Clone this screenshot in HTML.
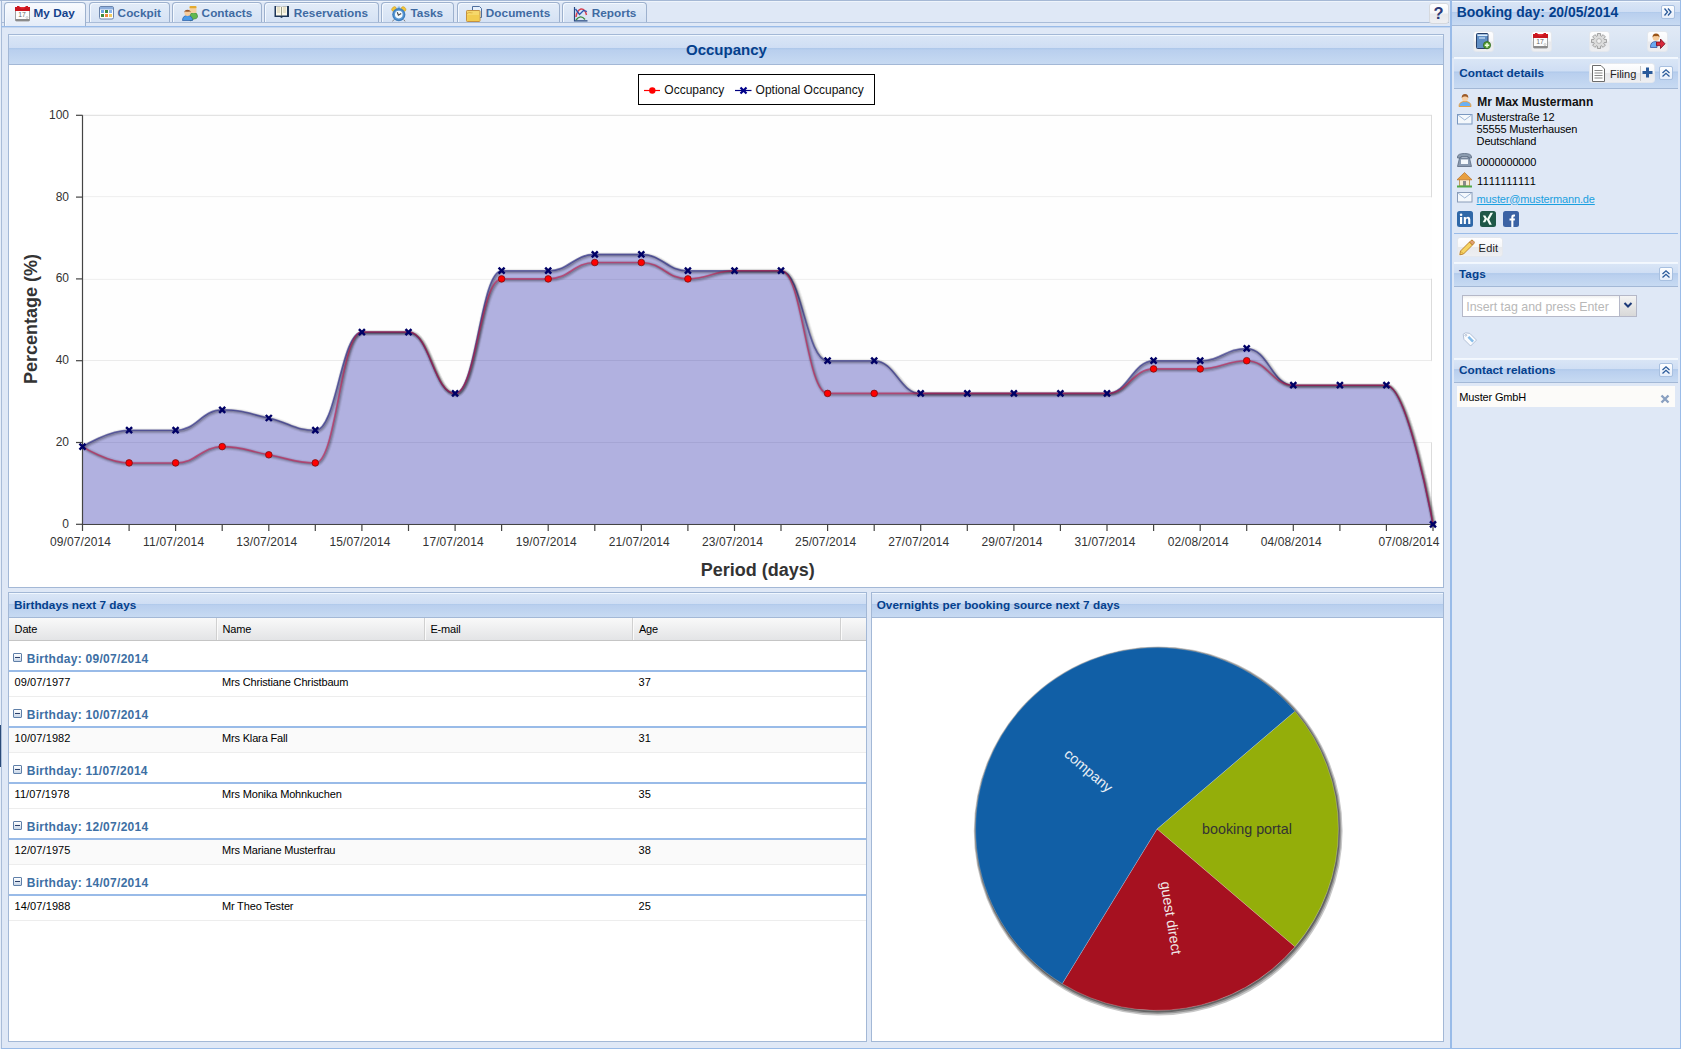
<!DOCTYPE html>
<html><head><meta charset="utf-8"><style>
*{box-sizing:border-box;margin:0;padding:0}
html,body{width:1681px;height:1049px;overflow:hidden;background:#dfe8f6;font-family:"Liberation Sans",sans-serif;position:relative}
.a{position:absolute}
.ic{position:absolute;overflow:visible}
.t{position:absolute;white-space:nowrap;line-height:1}
.hdr{position:absolute;background:linear-gradient(#dae6f6 0%,#cfdef4 44%,#aec8ea 46%,#b9cfee 52%,#c7daf2 100%);border-bottom:1px solid #a3b8d6;box-shadow:inset 0 1px 0 #f0f7ff}
.ttl{position:absolute;white-space:nowrap;font-weight:bold;font-size:11.75px;color:#04408c;letter-spacing:0.04px;line-height:1;margin-top:-0.65px}
.tab{position:absolute;top:2px;height:20px;border:1px solid #9db1ce;border-bottom:none;border-radius:4px 4px 0 0;background:linear-gradient(#e3ecf8,#d5e2f4);box-shadow:inset 1px 1px 0 #f4f9ff}
.tab.act{height:24px;background:linear-gradient(#f9fbfe,#e4ecf8)}
.tabt{position:absolute;top:7.35px;font-weight:bold;font-size:11.75px;color:#416da3;letter-spacing:0.05px;white-space:nowrap;line-height:1}
.ax{font:12px "Liberation Sans",sans-serif;fill:#333}
.at{font:bold 18px "Liberation Sans",sans-serif;fill:#333}
.lg{font:12px "Liberation Sans",sans-serif;fill:#111}
.pl{font:14.3px "Liberation Sans",sans-serif}
.g11{font-size:11px;color:#000;letter-spacing:-0.15px}
.grp{font-weight:bold;font-size:12px;color:#3d6fa4;letter-spacing:0.28px;margin-top:-0.2px}
.btn{position:absolute;border:1px solid #e4e8ee;border-radius:3px;background:linear-gradient(#fefeff 0%,#f6f7f9 48%,#e8e9ec 52%,#eeeff2 100%)}
.tool{position:absolute;width:14px;height:14px;border:1px solid #a8c0e0;border-radius:2px;background:linear-gradient(#fdfeff,#e6eefa)}
</style></head>
<body>
<div class="a" style="left:0;top:0;width:1450px;height:1px;background:#a5b8d5"></div><div class="a" style="left:2px;top:1px;width:1447px;height:1px;background:#eef4fb"></div>
<div class="a" style="left:1px;top:1px;width:1px;height:25px;background:#a9bcd8"></div>
<div class="a" style="left:2px;top:22px;width:1447px;height:1px;background:#a9bcd8"></div>
<div class="tab act" style="left:4px;width:82px"></div><svg class="ic" style="left:15px;top:6px" width="16" height="16" viewBox="0 0 16 16"><rect x="0.5" y="1.5" width="14" height="13.5" rx="0.8" fill="#fdfdfd" stroke="#a0a0a0"/><rect x="0" y="1" width="15" height="4" fill="#c8161e"/><rect x="2" y="0" width="2.5" height="2" fill="#d01820"/><rect x="10.5" y="0" width="2.5" height="2" fill="#d01820"/><rect x="5.5" y="1" width="4" height="1.5" fill="#e83038"/><rect x="0.5" y="13" width="14" height="2" fill="#8a8a8a"/><text x="7" y="11.3" font-size="6.8" font-family="Liberation Sans" text-anchor="middle" fill="#6a6a6a">17</text><circle cx="12" cy="11.5" r="1" fill="none" stroke="#b0b0b0" stroke-width="0.6"/></svg><div class="tabt" style="left:33.5px;color:#15428b">My Day</div>
<div class="tab" style="left:89px;width:81px"></div><svg class="ic" style="left:98px;top:6px" width="16" height="16" viewBox="0 0 16 16"><rect x="1.5" y="0.5" width="14" height="12.5" rx="1.5" fill="#fff" stroke="#6a84ac"/><rect x="2" y="1" width="13" height="2.5" fill="#8fb0de"/><rect x="3" y="4" width="3" height="3" fill="#72a8e4"/><rect x="7" y="4" width="3" height="3" fill="#3c8a40"/><rect x="11" y="4" width="3" height="3" fill="#88b4ec"/><rect x="3" y="8" width="3" height="3" fill="#3c8a40"/><rect x="7" y="8" width="3" height="3" fill="#ee8840"/><rect x="11" y="8" width="3" height="3" fill="#f0cc60"/></svg><div class="tabt" style="left:117.60000000000001px;color:#3f6aa2">Cockpit</div>
<div class="tab" style="left:172px;width:90px"></div><svg class="ic" style="left:182px;top:6px" width="16" height="16" viewBox="0 0 16 16"><path d="M8,15 V10 Q8,6.5 11.5,6.5 Q15.5,6.5 15.5,10 V11 Q15,13 12,13 Z" fill="#62b850" stroke="#3a7a30" stroke-width="0.6"/><rect x="7.5" y="0" width="7" height="7" rx="1.5" fill="#f4d0a0"/><rect x="7.5" y="0" width="7" height="2.3" rx="1" fill="#e2aa30"/><path d="M0.5,14.5 Q0.5,9.5 5.5,9.5 Q10.5,9.5 10.5,14.5 Z" fill="#4a9ae8" stroke="#2a5aa0" stroke-width="0.7"/><circle cx="5.5" cy="7" r="3" fill="#f6cc9c"/><path d="M2.3,6.5 Q2.5,3.8 5.5,3.8 Q8.5,3.8 8.7,6.5 L7.5,5.5 Q5.5,6.2 3.5,5.5 Z" fill="#9a5a2e"/></svg><div class="tabt" style="left:201.6px;color:#3f6aa2">Contacts</div>
<div class="tab" style="left:264px;width:115px"></div><svg class="ic" style="left:274px;top:5px" width="16" height="16" viewBox="0 0 16 16"><path d="M0.5,1 H6 L7.5,2 L9,1 H15 V12 H9 L7.5,13 L6,12 H0.5 Z" fill="#1e3658"/><rect x="2" y="1.3" width="5.2" height="9.2" fill="#fbf8ea"/><rect x="7.8" y="1.3" width="5.2" height="9.2" fill="#fbf8ea"/><path d="M3,3 H6 M3,5 H6 M3,7 H6 M9,3 H12 M9,5 H12 M9,7 H12" stroke="#d4ccaa" stroke-width="1"/><path d="M7.5,2 V10.5" stroke="#a8a888" stroke-width="0.8"/></svg><div class="tabt" style="left:293.7px;color:#3f6aa2">Reservations</div>
<div class="tab" style="left:381px;width:73px"></div><svg class="ic" style="left:391px;top:6px" width="16" height="16" viewBox="0 0 16 16"><ellipse cx="3" cy="3" rx="2.6" ry="2" transform="rotate(-40 3 3)" fill="#f0c438" stroke="#c89820" stroke-width="0.5"/><ellipse cx="12.6" cy="3" rx="2.6" ry="2" transform="rotate(40 12.6 3)" fill="#f0c438" stroke="#c89820" stroke-width="0.5"/><rect x="6.6" y="0.6" width="2.6" height="1.8" rx="0.6" fill="#8abce0"/><circle cx="7.8" cy="8.6" r="6.6" fill="#3f7fbe"/><circle cx="7.8" cy="8.6" r="5.2" fill="#5a9ad6"/><circle cx="7.8" cy="8.6" r="3.8" fill="#f4fbff"/><path d="M6.3,6.2 L7.4,9.2 L10.2,7.6" fill="none" stroke="#4a4a4a" stroke-width="1.2"/><path d="M2.8,13.6 L1.6,15.4 M12.8,13.6 L14,15.4" stroke="#707070" stroke-width="0.9"/></svg><div class="tabt" style="left:410.5px;color:#3f6aa2">Tasks</div>
<div class="tab" style="left:457px;width:103px"></div><svg class="ic" style="left:466px;top:5.5px" width="16" height="16" viewBox="0 0 16 16"><path d="M6.5,0.5 H13.5 L15.5,2.5 V11.5 H6.5 Z" fill="#e6f0fc" stroke="#4f6f9e"/><rect x="0.5" y="4.5" width="13.5" height="11" rx="0.8" fill="#f6d86a" stroke="#c49040"/><path d="M1,7.5 Q2.5,6 5.5,6.8 L6.5,6.8" fill="none" stroke="#d8a840" stroke-width="0.9"/><rect x="1.2" y="9" width="12" height="6" fill="#f2cc50"/></svg><div class="tabt" style="left:485.8px;color:#3f6aa2">Documents</div>
<div class="tab" style="left:562px;width:85px"></div><svg class="ic" style="left:572.5px;top:6px" width="16" height="16" viewBox="0 0 16 16"><path d="M1.5,1 V14.8 H14.5" fill="none" stroke="#274880" stroke-width="1.2"/><path d="M3,11 Q4,4 8,3 Q12,2.5 13.5,9" fill="none" stroke="#d84050" stroke-width="1.5"/><path d="M2.5,3 L6.5,8.5 L10.5,4.5 L14,5.5" fill="none" stroke="#2a54b0" stroke-width="1.3"/><path d="M3,14 Q7.5,8 12,13.5" fill="none" stroke="#3f8a40" stroke-width="1.4"/></svg><div class="tabt" style="left:591.7px;color:#3f6aa2">Reports</div>
<div class="btn" style="left:1428.5px;top:2.5px;width:20.5px;height:21px;border-color:#d6d9de"></div>
<div class="t" style="left:1433.6px;top:5.2px;font-weight:bold;font-size:16.5px;color:#2c3a78">?</div>
<div class="a" style="left:1px;top:26px;width:1449px;height:1px;background:#99bbe8"></div>
<div class="a" style="left:1px;top:27px;width:1449px;height:1px;background:#c5d6ee"></div>
<div class="a" style="left:1px;top:27px;width:1px;height:1022px;background:#a9bcd8"></div>
<div class="a" style="left:1px;top:1048px;width:1449px;height:1px;background:#99bbe8"></div>
<div class="a" style="left:0;top:1px;width:1px;height:1048px;background:#e6eef9"></div>
<div class="a" style="left:0;top:725px;width:1px;height:42px;background:#2a4a78"></div>
<div class="a" style="left:8px;top:34px;width:1436px;height:554px;border:1px solid #a3b8d6;background:#fff"></div>
<div class="hdr" style="left:9px;top:35px;width:1434px;height:30px"></div>
<div class="t" style="left:686px;top:41.5px;font-weight:bold;font-size:15px;color:#04408c">Occupancy</div>
<div class="a" style="left:8px;top:592px;width:859px;height:450px;border:1px solid #a3b8d6;background:#fff"></div>
<div class="hdr" style="left:9px;top:593px;width:857px;height:25px"></div>
<div class="ttl" style="left:14px;top:600px">Birthdays next 7 days</div>
<div class="a" style="left:9px;top:618px;width:857px;height:23px;background:linear-gradient(#f9f9f9,#e3e4e6);border-bottom:1px solid #c5c5c5"></div>
<div class="a" style="left:216px;top:618px;width:1px;height:22px;background:#d0d0d0"></div>
<div class="a" style="left:217px;top:618px;width:1px;height:22px;background:#fbfbfb"></div>
<div class="a" style="left:424px;top:618px;width:1px;height:22px;background:#d0d0d0"></div>
<div class="a" style="left:425px;top:618px;width:1px;height:22px;background:#fbfbfb"></div>
<div class="a" style="left:632px;top:618px;width:1px;height:22px;background:#d0d0d0"></div>
<div class="a" style="left:633px;top:618px;width:1px;height:22px;background:#fbfbfb"></div>
<div class="a" style="left:840px;top:618px;width:1px;height:22px;background:#d0d0d0"></div>
<div class="a" style="left:841px;top:618px;width:1px;height:22px;background:#fbfbfb"></div>
<div class="t g11" style="left:14.6px;top:624px">Date</div>
<div class="t g11" style="left:222.4px;top:624px">Name</div>
<div class="t g11" style="left:430.4px;top:624px">E-mail</div>
<div class="t g11" style="left:638.9px;top:624px">Age</div>
<div class="a" style="left:9px;top:670px;width:857px;height:2px;background:#99bbe8"></div>
<div class="a" style="left:13px;top:653px;width:9px;height:9px;border:1px solid #5f7fa8;border-radius:1px;background:linear-gradient(#fff,#c8d6e8)"></div>
<div class="a" style="left:15px;top:657px;width:5px;height:1px;background:#2a3f6a"></div>
<div class="t grp" style="left:26.8px;top:653.5px">Birthday: 09/07/2014</div>
<div class="a" style="left:9px;top:672px;width:857px;height:25px;background:#fff;border-bottom:1px solid #ededed"></div>
<div class="t g11" style="left:14.5px;top:676.5px;letter-spacing:0.1px">09/07/1977</div>
<div class="t g11" style="left:221.9px;top:676.5px;letter-spacing:-0.15px">Mrs Christiane Christbaum</div>
<div class="t g11" style="left:638.4px;top:676.5px;letter-spacing:0.2px">37</div>
<div class="a" style="left:9px;top:726px;width:857px;height:2px;background:#99bbe8"></div>
<div class="a" style="left:13px;top:709px;width:9px;height:9px;border:1px solid #5f7fa8;border-radius:1px;background:linear-gradient(#fff,#c8d6e8)"></div>
<div class="a" style="left:15px;top:713px;width:5px;height:1px;background:#2a3f6a"></div>
<div class="t grp" style="left:26.8px;top:709.5px">Birthday: 10/07/2014</div>
<div class="a" style="left:9px;top:728px;width:857px;height:25px;background:#fafafa;border-bottom:1px solid #ededed"></div>
<div class="t g11" style="left:14.5px;top:732.5px;letter-spacing:0.1px">10/07/1982</div>
<div class="t g11" style="left:221.9px;top:732.5px;letter-spacing:-0.15px">Mrs Klara Fall</div>
<div class="t g11" style="left:638.4px;top:732.5px;letter-spacing:0.2px">31</div>
<div class="a" style="left:9px;top:782px;width:857px;height:2px;background:#99bbe8"></div>
<div class="a" style="left:13px;top:765px;width:9px;height:9px;border:1px solid #5f7fa8;border-radius:1px;background:linear-gradient(#fff,#c8d6e8)"></div>
<div class="a" style="left:15px;top:769px;width:5px;height:1px;background:#2a3f6a"></div>
<div class="t grp" style="left:26.8px;top:765.5px">Birthday: 11/07/2014</div>
<div class="a" style="left:9px;top:784px;width:857px;height:25px;background:#fff;border-bottom:1px solid #ededed"></div>
<div class="t g11" style="left:14.5px;top:788.5px;letter-spacing:0.1px">11/07/1978</div>
<div class="t g11" style="left:221.9px;top:788.5px;letter-spacing:-0.15px">Mrs Monika Mohnkuchen</div>
<div class="t g11" style="left:638.4px;top:788.5px;letter-spacing:0.2px">35</div>
<div class="a" style="left:9px;top:838px;width:857px;height:2px;background:#99bbe8"></div>
<div class="a" style="left:13px;top:821px;width:9px;height:9px;border:1px solid #5f7fa8;border-radius:1px;background:linear-gradient(#fff,#c8d6e8)"></div>
<div class="a" style="left:15px;top:825px;width:5px;height:1px;background:#2a3f6a"></div>
<div class="t grp" style="left:26.8px;top:821.5px">Birthday: 12/07/2014</div>
<div class="a" style="left:9px;top:840px;width:857px;height:25px;background:#fafafa;border-bottom:1px solid #ededed"></div>
<div class="t g11" style="left:14.5px;top:844.5px;letter-spacing:0.1px">12/07/1975</div>
<div class="t g11" style="left:221.9px;top:844.5px;letter-spacing:-0.15px">Mrs Mariane Musterfrau</div>
<div class="t g11" style="left:638.4px;top:844.5px;letter-spacing:0.2px">38</div>
<div class="a" style="left:9px;top:894px;width:857px;height:2px;background:#99bbe8"></div>
<div class="a" style="left:13px;top:877px;width:9px;height:9px;border:1px solid #5f7fa8;border-radius:1px;background:linear-gradient(#fff,#c8d6e8)"></div>
<div class="a" style="left:15px;top:881px;width:5px;height:1px;background:#2a3f6a"></div>
<div class="t grp" style="left:26.8px;top:877.5px">Birthday: 14/07/2014</div>
<div class="a" style="left:9px;top:896px;width:857px;height:25px;background:#fff;border-bottom:1px solid #ededed"></div>
<div class="t g11" style="left:14.5px;top:900.5px;letter-spacing:0.1px">14/07/1988</div>
<div class="t g11" style="left:221.9px;top:900.5px;letter-spacing:-0.15px">Mr Theo Tester</div>
<div class="t g11" style="left:638.4px;top:900.5px;letter-spacing:0.2px">25</div>
<div class="a" style="left:871px;top:592px;width:573px;height:450px;border:1px solid #a3b8d6;background:#fff"></div>
<div class="hdr" style="left:872px;top:593px;width:571px;height:25px"></div>
<div class="ttl" style="left:876.7px;top:600px">Overnights per booking source next 7 days</div>
<svg class="a" style="left:0;top:0" width="1681" height="1049"><rect x="82.5" y="115.3" width="1349.0" height="81.8" fill="#fefefe" stroke="#dcdcdc" stroke-width="1"/>
<rect x="82.5" y="278.9" width="1349.0" height="81.8" fill="#fefefe" stroke="#dcdcdc" stroke-width="1"/>
<rect x="82.5" y="442.5" width="1349.0" height="81.8" fill="#fefefe" stroke="#dcdcdc" stroke-width="1"/>
<rect x="82.5" y="197.1" width="1349.0" height="81.8" fill="#fefefe"/>
<rect x="82.5" y="360.7" width="1349.0" height="81.8" fill="#fefefe"/>
<path d="M82.50,446.59 C82.50,446.59 107.90,430.23 129.07,430.23 C150.24,430.23 154.47,430.23 175.64,430.23 C196.81,430.23 201.04,409.78 222.21,409.78 C243.37,409.78 248.10,413.43 268.78,417.96 C289.45,422.49 294.18,430.23 315.34,430.23 C336.51,430.23 340.75,332.07 361.91,332.07 C383.08,332.07 387.32,332.07 408.48,332.07 C429.65,332.07 433.88,393.42 455.05,393.42 C476.22,393.42 480.45,270.72 501.62,270.72 C522.79,270.72 527.02,270.72 548.19,270.72 C569.36,270.72 573.59,254.36 594.76,254.36 C615.93,254.36 620.16,254.36 641.33,254.36 C662.50,254.36 666.73,270.72 687.90,270.72 C709.06,270.72 713.30,270.72 734.47,270.72 C755.63,270.72 759.87,270.72 781.03,270.72 C802.20,270.72 806.44,360.70 827.60,360.70 C848.77,360.70 853.00,360.70 874.17,360.70 C895.34,360.70 899.57,393.42 920.74,393.42 C941.91,393.42 946.14,393.42 967.31,393.42 C988.48,393.42 992.71,393.42 1013.88,393.42 C1035.05,393.42 1039.28,393.42 1060.45,393.42 C1081.62,393.42 1085.85,393.42 1107.02,393.42 C1128.18,393.42 1132.42,360.70 1153.59,360.70 C1174.75,360.70 1178.99,360.70 1200.16,360.70 C1221.32,360.70 1225.56,348.43 1246.72,348.43 C1267.89,348.43 1272.13,385.24 1293.29,385.24 C1314.46,385.24 1318.69,385.24 1339.86,385.24 C1361.03,385.24 1365.26,385.24 1386.43,385.24 C1407.60,385.24 1433.00,524.30 1433.00,524.30 L1433.00,524.30 L82.50,524.30 Z" fill="#00009a" fill-opacity="0.3" stroke="none"/>
<path d="M82.50,446.59 C82.50,446.59 107.90,430.23 129.07,430.23 C150.24,430.23 154.47,430.23 175.64,430.23 C196.81,430.23 201.04,409.78 222.21,409.78 C243.37,409.78 248.10,413.43 268.78,417.96 C289.45,422.49 294.18,430.23 315.34,430.23 C336.51,430.23 340.75,332.07 361.91,332.07 C383.08,332.07 387.32,332.07 408.48,332.07 C429.65,332.07 433.88,393.42 455.05,393.42 C476.22,393.42 480.45,270.72 501.62,270.72 C522.79,270.72 527.02,270.72 548.19,270.72 C569.36,270.72 573.59,254.36 594.76,254.36 C615.93,254.36 620.16,254.36 641.33,254.36 C662.50,254.36 666.73,270.72 687.90,270.72 C709.06,270.72 713.30,270.72 734.47,270.72 C755.63,270.72 759.87,270.72 781.03,270.72 C802.20,270.72 806.44,360.70 827.60,360.70 C848.77,360.70 853.00,360.70 874.17,360.70 C895.34,360.70 899.57,393.42 920.74,393.42 C941.91,393.42 946.14,393.42 967.31,393.42 C988.48,393.42 992.71,393.42 1013.88,393.42 C1035.05,393.42 1039.28,393.42 1060.45,393.42 C1081.62,393.42 1085.85,393.42 1107.02,393.42 C1128.18,393.42 1132.42,360.70 1153.59,360.70 C1174.75,360.70 1178.99,360.70 1200.16,360.70 C1221.32,360.70 1225.56,348.43 1246.72,348.43 C1267.89,348.43 1272.13,385.24 1293.29,385.24 C1314.46,385.24 1318.69,385.24 1339.86,385.24 C1361.03,385.24 1365.26,385.24 1386.43,385.24 C1407.60,385.24 1433.00,524.30 1433.00,524.30" fill="none" stroke="#000" stroke-opacity="0.05" stroke-width="6" transform="translate(1,1)"/>
<path d="M82.50,446.59 C82.50,446.59 107.90,430.23 129.07,430.23 C150.24,430.23 154.47,430.23 175.64,430.23 C196.81,430.23 201.04,409.78 222.21,409.78 C243.37,409.78 248.10,413.43 268.78,417.96 C289.45,422.49 294.18,430.23 315.34,430.23 C336.51,430.23 340.75,332.07 361.91,332.07 C383.08,332.07 387.32,332.07 408.48,332.07 C429.65,332.07 433.88,393.42 455.05,393.42 C476.22,393.42 480.45,270.72 501.62,270.72 C522.79,270.72 527.02,270.72 548.19,270.72 C569.36,270.72 573.59,254.36 594.76,254.36 C615.93,254.36 620.16,254.36 641.33,254.36 C662.50,254.36 666.73,270.72 687.90,270.72 C709.06,270.72 713.30,270.72 734.47,270.72 C755.63,270.72 759.87,270.72 781.03,270.72 C802.20,270.72 806.44,360.70 827.60,360.70 C848.77,360.70 853.00,360.70 874.17,360.70 C895.34,360.70 899.57,393.42 920.74,393.42 C941.91,393.42 946.14,393.42 967.31,393.42 C988.48,393.42 992.71,393.42 1013.88,393.42 C1035.05,393.42 1039.28,393.42 1060.45,393.42 C1081.62,393.42 1085.85,393.42 1107.02,393.42 C1128.18,393.42 1132.42,360.70 1153.59,360.70 C1174.75,360.70 1178.99,360.70 1200.16,360.70 C1221.32,360.70 1225.56,348.43 1246.72,348.43 C1267.89,348.43 1272.13,385.24 1293.29,385.24 C1314.46,385.24 1318.69,385.24 1339.86,385.24 C1361.03,385.24 1365.26,385.24 1386.43,385.24 C1407.60,385.24 1433.00,524.30 1433.00,524.30" fill="none" stroke="#000" stroke-opacity="0.1" stroke-width="4" transform="translate(1,1)"/>
<path d="M82.50,446.59 C82.50,446.59 107.90,430.23 129.07,430.23 C150.24,430.23 154.47,430.23 175.64,430.23 C196.81,430.23 201.04,409.78 222.21,409.78 C243.37,409.78 248.10,413.43 268.78,417.96 C289.45,422.49 294.18,430.23 315.34,430.23 C336.51,430.23 340.75,332.07 361.91,332.07 C383.08,332.07 387.32,332.07 408.48,332.07 C429.65,332.07 433.88,393.42 455.05,393.42 C476.22,393.42 480.45,270.72 501.62,270.72 C522.79,270.72 527.02,270.72 548.19,270.72 C569.36,270.72 573.59,254.36 594.76,254.36 C615.93,254.36 620.16,254.36 641.33,254.36 C662.50,254.36 666.73,270.72 687.90,270.72 C709.06,270.72 713.30,270.72 734.47,270.72 C755.63,270.72 759.87,270.72 781.03,270.72 C802.20,270.72 806.44,360.70 827.60,360.70 C848.77,360.70 853.00,360.70 874.17,360.70 C895.34,360.70 899.57,393.42 920.74,393.42 C941.91,393.42 946.14,393.42 967.31,393.42 C988.48,393.42 992.71,393.42 1013.88,393.42 C1035.05,393.42 1039.28,393.42 1060.45,393.42 C1081.62,393.42 1085.85,393.42 1107.02,393.42 C1128.18,393.42 1132.42,360.70 1153.59,360.70 C1174.75,360.70 1178.99,360.70 1200.16,360.70 C1221.32,360.70 1225.56,348.43 1246.72,348.43 C1267.89,348.43 1272.13,385.24 1293.29,385.24 C1314.46,385.24 1318.69,385.24 1339.86,385.24 C1361.03,385.24 1365.26,385.24 1386.43,385.24 C1407.60,385.24 1433.00,524.30 1433.00,524.30" fill="none" stroke="#000" stroke-opacity="0.15" stroke-width="2" transform="translate(1,1)"/>
<path d="M82.50,446.59 C82.50,446.59 107.90,430.23 129.07,430.23 C150.24,430.23 154.47,430.23 175.64,430.23 C196.81,430.23 201.04,409.78 222.21,409.78 C243.37,409.78 248.10,413.43 268.78,417.96 C289.45,422.49 294.18,430.23 315.34,430.23 C336.51,430.23 340.75,332.07 361.91,332.07 C383.08,332.07 387.32,332.07 408.48,332.07 C429.65,332.07 433.88,393.42 455.05,393.42 C476.22,393.42 480.45,270.72 501.62,270.72 C522.79,270.72 527.02,270.72 548.19,270.72 C569.36,270.72 573.59,254.36 594.76,254.36 C615.93,254.36 620.16,254.36 641.33,254.36 C662.50,254.36 666.73,270.72 687.90,270.72 C709.06,270.72 713.30,270.72 734.47,270.72 C755.63,270.72 759.87,270.72 781.03,270.72 C802.20,270.72 806.44,360.70 827.60,360.70 C848.77,360.70 853.00,360.70 874.17,360.70 C895.34,360.70 899.57,393.42 920.74,393.42 C941.91,393.42 946.14,393.42 967.31,393.42 C988.48,393.42 992.71,393.42 1013.88,393.42 C1035.05,393.42 1039.28,393.42 1060.45,393.42 C1081.62,393.42 1085.85,393.42 1107.02,393.42 C1128.18,393.42 1132.42,360.70 1153.59,360.70 C1174.75,360.70 1178.99,360.70 1200.16,360.70 C1221.32,360.70 1225.56,348.43 1246.72,348.43 C1267.89,348.43 1272.13,385.24 1293.29,385.24 C1314.46,385.24 1318.69,385.24 1339.86,385.24 C1361.03,385.24 1365.26,385.24 1386.43,385.24 C1407.60,385.24 1433.00,524.30 1433.00,524.30" fill="none" stroke="#1a1a80" stroke-opacity="0.55" stroke-width="1.6"/>
<path d="M82.50,446.59 C82.50,446.59 107.90,462.95 129.07,462.95 C150.24,462.95 154.47,462.95 175.64,462.95 C196.81,462.95 201.04,446.59 222.21,446.59 C243.37,446.59 247.93,451.11 268.78,454.77 C289.62,458.43 294.18,462.95 315.34,462.95 C336.51,462.95 340.75,332.07 361.91,332.07 C383.08,332.07 387.32,332.07 408.48,332.07 C429.65,332.07 433.88,393.42 455.05,393.42 C476.22,393.42 480.45,278.90 501.62,278.90 C522.79,278.90 527.02,278.90 548.19,278.90 C569.36,278.90 573.59,262.54 594.76,262.54 C615.93,262.54 620.16,262.54 641.33,262.54 C662.50,262.54 666.73,278.90 687.90,278.90 C709.06,278.90 713.30,270.72 734.47,270.72 C755.63,270.72 759.87,270.72 781.03,270.72 C802.20,270.72 806.44,393.42 827.60,393.42 C848.77,393.42 853.00,393.42 874.17,393.42 C895.34,393.42 899.57,393.42 920.74,393.42 C941.91,393.42 946.14,393.42 967.31,393.42 C988.48,393.42 992.71,393.42 1013.88,393.42 C1035.05,393.42 1039.28,393.42 1060.45,393.42 C1081.62,393.42 1085.85,393.42 1107.02,393.42 C1128.18,393.42 1132.42,368.88 1153.59,368.88 C1174.75,368.88 1178.99,368.88 1200.16,368.88 C1221.32,368.88 1225.56,360.70 1246.72,360.70 C1267.89,360.70 1272.13,385.24 1293.29,385.24 C1314.46,385.24 1318.69,385.24 1339.86,385.24 C1361.03,385.24 1365.26,385.24 1386.43,385.24 C1407.60,385.24 1433.00,524.30 1433.00,524.30" fill="none" stroke="#000" stroke-opacity="0.05" stroke-width="6" transform="translate(1,1)"/>
<path d="M82.50,446.59 C82.50,446.59 107.90,462.95 129.07,462.95 C150.24,462.95 154.47,462.95 175.64,462.95 C196.81,462.95 201.04,446.59 222.21,446.59 C243.37,446.59 247.93,451.11 268.78,454.77 C289.62,458.43 294.18,462.95 315.34,462.95 C336.51,462.95 340.75,332.07 361.91,332.07 C383.08,332.07 387.32,332.07 408.48,332.07 C429.65,332.07 433.88,393.42 455.05,393.42 C476.22,393.42 480.45,278.90 501.62,278.90 C522.79,278.90 527.02,278.90 548.19,278.90 C569.36,278.90 573.59,262.54 594.76,262.54 C615.93,262.54 620.16,262.54 641.33,262.54 C662.50,262.54 666.73,278.90 687.90,278.90 C709.06,278.90 713.30,270.72 734.47,270.72 C755.63,270.72 759.87,270.72 781.03,270.72 C802.20,270.72 806.44,393.42 827.60,393.42 C848.77,393.42 853.00,393.42 874.17,393.42 C895.34,393.42 899.57,393.42 920.74,393.42 C941.91,393.42 946.14,393.42 967.31,393.42 C988.48,393.42 992.71,393.42 1013.88,393.42 C1035.05,393.42 1039.28,393.42 1060.45,393.42 C1081.62,393.42 1085.85,393.42 1107.02,393.42 C1128.18,393.42 1132.42,368.88 1153.59,368.88 C1174.75,368.88 1178.99,368.88 1200.16,368.88 C1221.32,368.88 1225.56,360.70 1246.72,360.70 C1267.89,360.70 1272.13,385.24 1293.29,385.24 C1314.46,385.24 1318.69,385.24 1339.86,385.24 C1361.03,385.24 1365.26,385.24 1386.43,385.24 C1407.60,385.24 1433.00,524.30 1433.00,524.30" fill="none" stroke="#000" stroke-opacity="0.1" stroke-width="4" transform="translate(1,1)"/>
<path d="M82.50,446.59 C82.50,446.59 107.90,462.95 129.07,462.95 C150.24,462.95 154.47,462.95 175.64,462.95 C196.81,462.95 201.04,446.59 222.21,446.59 C243.37,446.59 247.93,451.11 268.78,454.77 C289.62,458.43 294.18,462.95 315.34,462.95 C336.51,462.95 340.75,332.07 361.91,332.07 C383.08,332.07 387.32,332.07 408.48,332.07 C429.65,332.07 433.88,393.42 455.05,393.42 C476.22,393.42 480.45,278.90 501.62,278.90 C522.79,278.90 527.02,278.90 548.19,278.90 C569.36,278.90 573.59,262.54 594.76,262.54 C615.93,262.54 620.16,262.54 641.33,262.54 C662.50,262.54 666.73,278.90 687.90,278.90 C709.06,278.90 713.30,270.72 734.47,270.72 C755.63,270.72 759.87,270.72 781.03,270.72 C802.20,270.72 806.44,393.42 827.60,393.42 C848.77,393.42 853.00,393.42 874.17,393.42 C895.34,393.42 899.57,393.42 920.74,393.42 C941.91,393.42 946.14,393.42 967.31,393.42 C988.48,393.42 992.71,393.42 1013.88,393.42 C1035.05,393.42 1039.28,393.42 1060.45,393.42 C1081.62,393.42 1085.85,393.42 1107.02,393.42 C1128.18,393.42 1132.42,368.88 1153.59,368.88 C1174.75,368.88 1178.99,368.88 1200.16,368.88 C1221.32,368.88 1225.56,360.70 1246.72,360.70 C1267.89,360.70 1272.13,385.24 1293.29,385.24 C1314.46,385.24 1318.69,385.24 1339.86,385.24 C1361.03,385.24 1365.26,385.24 1386.43,385.24 C1407.60,385.24 1433.00,524.30 1433.00,524.30" fill="none" stroke="#000" stroke-opacity="0.15" stroke-width="2" transform="translate(1,1)"/>
<path d="M82.50,446.59 C82.50,446.59 107.90,462.95 129.07,462.95 C150.24,462.95 154.47,462.95 175.64,462.95 C196.81,462.95 201.04,446.59 222.21,446.59 C243.37,446.59 247.93,451.11 268.78,454.77 C289.62,458.43 294.18,462.95 315.34,462.95 C336.51,462.95 340.75,332.07 361.91,332.07 C383.08,332.07 387.32,332.07 408.48,332.07 C429.65,332.07 433.88,393.42 455.05,393.42 C476.22,393.42 480.45,278.90 501.62,278.90 C522.79,278.90 527.02,278.90 548.19,278.90 C569.36,278.90 573.59,262.54 594.76,262.54 C615.93,262.54 620.16,262.54 641.33,262.54 C662.50,262.54 666.73,278.90 687.90,278.90 C709.06,278.90 713.30,270.72 734.47,270.72 C755.63,270.72 759.87,270.72 781.03,270.72 C802.20,270.72 806.44,393.42 827.60,393.42 C848.77,393.42 853.00,393.42 874.17,393.42 C895.34,393.42 899.57,393.42 920.74,393.42 C941.91,393.42 946.14,393.42 967.31,393.42 C988.48,393.42 992.71,393.42 1013.88,393.42 C1035.05,393.42 1039.28,393.42 1060.45,393.42 C1081.62,393.42 1085.85,393.42 1107.02,393.42 C1128.18,393.42 1132.42,368.88 1153.59,368.88 C1174.75,368.88 1178.99,368.88 1200.16,368.88 C1221.32,368.88 1225.56,360.70 1246.72,360.70 C1267.89,360.70 1272.13,385.24 1293.29,385.24 C1314.46,385.24 1318.69,385.24 1339.86,385.24 C1361.03,385.24 1365.26,385.24 1386.43,385.24 C1407.60,385.24 1433.00,524.30 1433.00,524.30" fill="none" stroke="#cc1144" stroke-opacity="0.55" stroke-width="1.6"/>
<path d="M82.5,115.3 V524.5 H1433.5" fill="none" stroke="#444" stroke-width="1.2"/>
<path d="M76,524.3 H82.5" stroke="#444" stroke-width="1.2"/>
<path d="M76,442.5 H82.5" stroke="#444" stroke-width="1.2"/>
<path d="M76,360.7 H82.5" stroke="#444" stroke-width="1.2"/>
<path d="M76,278.9 H82.5" stroke="#444" stroke-width="1.2"/>
<path d="M76,197.1 H82.5" stroke="#444" stroke-width="1.2"/>
<path d="M76,115.3 H82.5" stroke="#444" stroke-width="1.2"/>
<path d="M82.5,524.3 V531" stroke="#444" stroke-width="1.2"/>
<path d="M129.1,524.3 V531" stroke="#444" stroke-width="1.2"/>
<path d="M175.6,524.3 V531" stroke="#444" stroke-width="1.2"/>
<path d="M222.2,524.3 V531" stroke="#444" stroke-width="1.2"/>
<path d="M268.8,524.3 V531" stroke="#444" stroke-width="1.2"/>
<path d="M315.3,524.3 V531" stroke="#444" stroke-width="1.2"/>
<path d="M361.9,524.3 V531" stroke="#444" stroke-width="1.2"/>
<path d="M408.5,524.3 V531" stroke="#444" stroke-width="1.2"/>
<path d="M455.1,524.3 V531" stroke="#444" stroke-width="1.2"/>
<path d="M501.6,524.3 V531" stroke="#444" stroke-width="1.2"/>
<path d="M548.2,524.3 V531" stroke="#444" stroke-width="1.2"/>
<path d="M594.8,524.3 V531" stroke="#444" stroke-width="1.2"/>
<path d="M641.3,524.3 V531" stroke="#444" stroke-width="1.2"/>
<path d="M687.9,524.3 V531" stroke="#444" stroke-width="1.2"/>
<path d="M734.5,524.3 V531" stroke="#444" stroke-width="1.2"/>
<path d="M781.0,524.3 V531" stroke="#444" stroke-width="1.2"/>
<path d="M827.6,524.3 V531" stroke="#444" stroke-width="1.2"/>
<path d="M874.2,524.3 V531" stroke="#444" stroke-width="1.2"/>
<path d="M920.7,524.3 V531" stroke="#444" stroke-width="1.2"/>
<path d="M967.3,524.3 V531" stroke="#444" stroke-width="1.2"/>
<path d="M1013.9,524.3 V531" stroke="#444" stroke-width="1.2"/>
<path d="M1060.4,524.3 V531" stroke="#444" stroke-width="1.2"/>
<path d="M1107.0,524.3 V531" stroke="#444" stroke-width="1.2"/>
<path d="M1153.6,524.3 V531" stroke="#444" stroke-width="1.2"/>
<path d="M1200.2,524.3 V531" stroke="#444" stroke-width="1.2"/>
<path d="M1246.7,524.3 V531" stroke="#444" stroke-width="1.2"/>
<path d="M1293.3,524.3 V531" stroke="#444" stroke-width="1.2"/>
<path d="M1339.9,524.3 V531" stroke="#444" stroke-width="1.2"/>
<path d="M1386.4,524.3 V531" stroke="#444" stroke-width="1.2"/>
<path d="M1433.0,524.3 V531" stroke="#444" stroke-width="1.2"/>
<circle cx="129.1" cy="462.9" r="3.3" fill="#f00" stroke="#7a1010" stroke-width="0.8"/>
<circle cx="175.6" cy="462.9" r="3.3" fill="#f00" stroke="#7a1010" stroke-width="0.8"/>
<circle cx="222.2" cy="446.6" r="3.3" fill="#f00" stroke="#7a1010" stroke-width="0.8"/>
<circle cx="268.8" cy="454.8" r="3.3" fill="#f00" stroke="#7a1010" stroke-width="0.8"/>
<circle cx="315.3" cy="462.9" r="3.3" fill="#f00" stroke="#7a1010" stroke-width="0.8"/>
<circle cx="501.6" cy="278.9" r="3.3" fill="#f00" stroke="#7a1010" stroke-width="0.8"/>
<circle cx="548.2" cy="278.9" r="3.3" fill="#f00" stroke="#7a1010" stroke-width="0.8"/>
<circle cx="594.8" cy="262.5" r="3.3" fill="#f00" stroke="#7a1010" stroke-width="0.8"/>
<circle cx="641.3" cy="262.5" r="3.3" fill="#f00" stroke="#7a1010" stroke-width="0.8"/>
<circle cx="687.9" cy="278.9" r="3.3" fill="#f00" stroke="#7a1010" stroke-width="0.8"/>
<circle cx="827.6" cy="393.4" r="3.3" fill="#f00" stroke="#7a1010" stroke-width="0.8"/>
<circle cx="874.2" cy="393.4" r="3.3" fill="#f00" stroke="#7a1010" stroke-width="0.8"/>
<circle cx="1153.6" cy="368.9" r="3.3" fill="#f00" stroke="#7a1010" stroke-width="0.8"/>
<circle cx="1200.2" cy="368.9" r="3.3" fill="#f00" stroke="#7a1010" stroke-width="0.8"/>
<circle cx="1246.7" cy="360.7" r="3.3" fill="#f00" stroke="#7a1010" stroke-width="0.8"/>
<path d="M79.5,443.6 L85.5,449.6 M85.5,443.6 L79.5,449.6" stroke="#000066" stroke-width="2.4"/>
<path d="M126.1,427.2 L132.1,433.2 M132.1,427.2 L126.1,433.2" stroke="#000066" stroke-width="2.4"/>
<path d="M172.6,427.2 L178.6,433.2 M178.6,427.2 L172.6,433.2" stroke="#000066" stroke-width="2.4"/>
<path d="M219.2,406.8 L225.2,412.8 M225.2,406.8 L219.2,412.8" stroke="#000066" stroke-width="2.4"/>
<path d="M265.8,415.0 L271.8,421.0 M271.8,415.0 L265.8,421.0" stroke="#000066" stroke-width="2.4"/>
<path d="M312.3,427.2 L318.3,433.2 M318.3,427.2 L312.3,433.2" stroke="#000066" stroke-width="2.4"/>
<path d="M358.9,329.1 L364.9,335.1 M364.9,329.1 L358.9,335.1" stroke="#000066" stroke-width="2.4"/>
<path d="M405.5,329.1 L411.5,335.1 M411.5,329.1 L405.5,335.1" stroke="#000066" stroke-width="2.4"/>
<path d="M452.1,390.4 L458.1,396.4 M458.1,390.4 L452.1,396.4" stroke="#000066" stroke-width="2.4"/>
<path d="M498.6,267.7 L504.6,273.7 M504.6,267.7 L498.6,273.7" stroke="#000066" stroke-width="2.4"/>
<path d="M545.2,267.7 L551.2,273.7 M551.2,267.7 L545.2,273.7" stroke="#000066" stroke-width="2.4"/>
<path d="M591.8,251.4 L597.8,257.4 M597.8,251.4 L591.8,257.4" stroke="#000066" stroke-width="2.4"/>
<path d="M638.3,251.4 L644.3,257.4 M644.3,251.4 L638.3,257.4" stroke="#000066" stroke-width="2.4"/>
<path d="M684.9,267.7 L690.9,273.7 M690.9,267.7 L684.9,273.7" stroke="#000066" stroke-width="2.4"/>
<path d="M731.5,267.7 L737.5,273.7 M737.5,267.7 L731.5,273.7" stroke="#000066" stroke-width="2.4"/>
<path d="M778.0,267.7 L784.0,273.7 M784.0,267.7 L778.0,273.7" stroke="#000066" stroke-width="2.4"/>
<path d="M824.6,357.7 L830.6,363.7 M830.6,357.7 L824.6,363.7" stroke="#000066" stroke-width="2.4"/>
<path d="M871.2,357.7 L877.2,363.7 M877.2,357.7 L871.2,363.7" stroke="#000066" stroke-width="2.4"/>
<path d="M917.7,390.4 L923.7,396.4 M923.7,390.4 L917.7,396.4" stroke="#000066" stroke-width="2.4"/>
<path d="M964.3,390.4 L970.3,396.4 M970.3,390.4 L964.3,396.4" stroke="#000066" stroke-width="2.4"/>
<path d="M1010.9,390.4 L1016.9,396.4 M1016.9,390.4 L1010.9,396.4" stroke="#000066" stroke-width="2.4"/>
<path d="M1057.4,390.4 L1063.4,396.4 M1063.4,390.4 L1057.4,396.4" stroke="#000066" stroke-width="2.4"/>
<path d="M1104.0,390.4 L1110.0,396.4 M1110.0,390.4 L1104.0,396.4" stroke="#000066" stroke-width="2.4"/>
<path d="M1150.6,357.7 L1156.6,363.7 M1156.6,357.7 L1150.6,363.7" stroke="#000066" stroke-width="2.4"/>
<path d="M1197.2,357.7 L1203.2,363.7 M1203.2,357.7 L1197.2,363.7" stroke="#000066" stroke-width="2.4"/>
<path d="M1243.7,345.4 L1249.7,351.4 M1249.7,345.4 L1243.7,351.4" stroke="#000066" stroke-width="2.4"/>
<path d="M1290.3,382.2 L1296.3,388.2 M1296.3,382.2 L1290.3,388.2" stroke="#000066" stroke-width="2.4"/>
<path d="M1336.9,382.2 L1342.9,388.2 M1342.9,382.2 L1336.9,388.2" stroke="#000066" stroke-width="2.4"/>
<path d="M1383.4,382.2 L1389.4,388.2 M1389.4,382.2 L1383.4,388.2" stroke="#000066" stroke-width="2.4"/>
<path d="M1430.0,521.3 L1436.0,527.3 M1436.0,521.3 L1430.0,527.3" stroke="#000066" stroke-width="2.4"/>
<text x="69" y="527.8" text-anchor="end" class="ax">0</text>
<text x="69" y="446.0" text-anchor="end" class="ax">20</text>
<text x="69" y="364.2" text-anchor="end" class="ax">40</text>
<text x="69" y="282.4" text-anchor="end" class="ax">60</text>
<text x="69" y="200.6" text-anchor="end" class="ax">80</text>
<text x="69" y="118.8" text-anchor="end" class="ax">100</text>
<text x="80.5" y="545.5" text-anchor="middle" class="ax" textLength="61">09/07/2014</text>
<text x="173.6" y="545.5" text-anchor="middle" class="ax" textLength="61">11/07/2014</text>
<text x="266.8" y="545.5" text-anchor="middle" class="ax" textLength="61">13/07/2014</text>
<text x="359.9" y="545.5" text-anchor="middle" class="ax" textLength="61">15/07/2014</text>
<text x="453.1" y="545.5" text-anchor="middle" class="ax" textLength="61">17/07/2014</text>
<text x="546.2" y="545.5" text-anchor="middle" class="ax" textLength="61">19/07/2014</text>
<text x="639.3" y="545.5" text-anchor="middle" class="ax" textLength="61">21/07/2014</text>
<text x="732.5" y="545.5" text-anchor="middle" class="ax" textLength="61">23/07/2014</text>
<text x="825.6" y="545.5" text-anchor="middle" class="ax" textLength="61">25/07/2014</text>
<text x="918.7" y="545.5" text-anchor="middle" class="ax" textLength="61">27/07/2014</text>
<text x="1011.9" y="545.5" text-anchor="middle" class="ax" textLength="61">29/07/2014</text>
<text x="1105.0" y="545.5" text-anchor="middle" class="ax" textLength="61">31/07/2014</text>
<text x="1198.2" y="545.5" text-anchor="middle" class="ax" textLength="61">02/08/2014</text>
<text x="1291.3" y="545.5" text-anchor="middle" class="ax" textLength="61">04/08/2014</text>
<text x="1439.5" y="545.5" text-anchor="end" class="ax" textLength="61">07/08/2014</text>
<text x="757.8" y="575.7" text-anchor="middle" class="at">Period (days)</text>
<text transform="translate(37,319) rotate(-90)" text-anchor="middle" class="at">Percentage (%)</text>
<rect x="638.5" y="74.5" width="236" height="30" fill="#fff" stroke="#000" stroke-width="1"/>
<path d="M644,90.5 H660" stroke="#f00" stroke-width="1.2"/><circle cx="652.3" cy="90.5" r="3.2" fill="#f00"/>
<text x="664.3" y="94.3" class="lg">Occupancy</text>
<path d="M735,90.5 H751.5" stroke="#000080" stroke-width="1.2"/><path d="M740.5,87.5 L746.5,93.5 M746.5,87.5 L740.5,93.5" stroke="#00008a" stroke-width="2.2"/>
<text x="755.6" y="94.3" class="lg">Optional Occupancy</text><circle cx="1158.2" cy="831.0" r="181.4" fill="none" stroke="rgb(200,200,200)" stroke-width="6"/>
<circle cx="1157.9" cy="830.5" r="181.4" fill="none" stroke="rgb(150,150,150)" stroke-width="4"/>
<circle cx="1157.6" cy="830.0" r="181.4" fill="none" stroke="rgb(100,100,100)" stroke-width="2"/>
<path d="M1157.0,829.0 L1294.94,711.19 A181.4,181.4 0 0 1 1294.94,946.81 Z" fill="#94ae0a" stroke="#fff" stroke-opacity="0.35" stroke-width="0.6"/>
<path d="M1157.0,829.0 L1294.94,946.81 A181.4,181.4 0 0 1 1062.22,983.67 Z" fill="#a61120" stroke="#fff" stroke-opacity="0.35" stroke-width="0.6"/>
<path d="M1157.0,829.0 L1062.22,983.67 A181.4,181.4 0 1 1 1294.94,711.19 Z" fill="#115fa6" stroke="#fff" stroke-opacity="0.35" stroke-width="0.6"/>
<text transform="translate(1088.6,770.5) rotate(40.5)" text-anchor="middle" dy="5" class="pl" fill="#e8eef5">company</text>
<text transform="translate(1247.0,829.0) rotate(0.0)" text-anchor="middle" dy="5" class="pl" fill="#333">booking portal</text>
<text transform="translate(1171.1,917.9) rotate(81.0)" text-anchor="middle" dy="5" class="pl" fill="#f0e8e8">guest direct</text></svg>
<div class="a" style="left:1450px;top:0;width:231px;height:1049px;background:#dfe8f6;border-left:2px solid #99bbe8;border-right:1px solid #99bbe8;border-top:1px solid #a5b8d5;border-bottom:1px solid #99bbe8"></div>
<div class="hdr" style="left:1452px;top:1px;width:228px;height:25px"></div>
<div class="t" style="left:1456.8px;top:6.1px;font-weight:bold;font-size:13.9px;color:#04408c;letter-spacing:0px">Booking day: 20/05/2014</div>
<div class="tool" style="left:1661px;top:5px"></div>
<svg class="ic" style="left:1663px;top:7px" width="10" height="10" viewBox="0 0 10 10"><path d="M1.5,1.5 L4.5,5 L1.5,8.5 M5,1.5 L8,5 L5,8.5" fill="none" stroke="#2a5a9a" stroke-width="1.3"/></svg>
<div class="a" style="left:1452px;top:26px;width:228px;height:32px;background:linear-gradient(#e1eaf6,#d3e0f1)"></div>
<div class="btn" style="left:1472.5px;top:30.5px;width:21px;height:21px"></div>
<svg class="ic" style="left:1475px;top:33px" width="16" height="16" viewBox="0 0 16 16"><rect x="1.5" y="0.5" width="11.5" height="15" rx="1" fill="#5f8ec4" stroke="#263e68"/><rect x="2.5" y="1.5" width="10" height="1.5" fill="#dfeefc"/><rect x="4" y="4.5" width="6" height="1" fill="#e4f2ff"/><circle cx="12" cy="12.2" r="3.6" fill="#5aa038" stroke="#2e6a20" stroke-width="0.8"/><path d="M12,10 V14.4 M9.8,12.2 H14.2" stroke="#f0ffe0" stroke-width="1.4"/></svg>
<div class="btn" style="left:1530.5px;top:30.5px;width:21px;height:21px"></div>
<svg class="ic" style="left:1533px;top:33px" width="16" height="16" viewBox="0 0 16 16"><rect x="0.5" y="1.5" width="14" height="13.5" rx="0.8" fill="#fdfdfd" stroke="#a0a0a0"/><rect x="0" y="1" width="15" height="4" fill="#c8161e"/><rect x="2" y="0" width="2.5" height="2" fill="#d01820"/><rect x="10.5" y="0" width="2.5" height="2" fill="#d01820"/><rect x="5.5" y="1" width="4" height="1.5" fill="#e83038"/><rect x="0.5" y="13" width="14" height="2" fill="#8a8a8a"/><text x="7" y="11.3" font-size="6.8" font-family="Liberation Sans" text-anchor="middle" fill="#6a6a6a">17</text><circle cx="12" cy="11.5" r="1" fill="none" stroke="#b0b0b0" stroke-width="0.6"/></svg>
<div class="btn" style="left:1588.5px;top:30.5px;width:21px;height:21px"></div>
<svg class="ic" style="left:1591px;top:33px" width="16" height="16" viewBox="0 0 16 16"><g fill="#dcdcdc" stroke="#8c8c8c" stroke-width="0.8"><path d="M15.43,6.42 L15.43,9.58 L13.14,9.67 L12.81,10.45 L14.37,12.14 L12.14,14.37 L10.45,12.81 L9.67,13.14 L9.58,15.43 L6.42,15.43 L6.33,13.14 L5.55,12.81 L3.86,14.37 L1.63,12.14 L3.19,10.45 L2.86,9.67 L0.57,9.58 L0.57,6.42 L2.86,6.33 L3.19,5.55 L1.63,3.86 L3.86,1.63 L5.55,3.19 L6.33,2.86 L6.42,0.57 L9.58,0.57 L9.67,2.86 L10.45,3.19 L12.14,1.63 L14.37,3.86 L12.81,5.55 L13.14,6.33 Z"/></g><circle cx="8" cy="8" r="2.4" fill="#f2f2f2" stroke="#a0a0a0" stroke-width="0.7"/></svg>
<div class="btn" style="left:1646.5px;top:30.5px;width:21px;height:21px"></div>
<svg class="ic" style="left:1649px;top:33px" width="16" height="16" viewBox="0 0 16 16"><path d="M1.5,14.5 Q1,8.5 7,8.5 Q8,8.5 8,10 V14.5 Z" fill="#6aaaf0" stroke="#2a4a98" stroke-width="0.7"/><circle cx="7" cy="4.5" r="3.3" fill="#f6cc9c"/><path d="M3.5,4.5 Q3.5,0.5 7,0.5 Q10.5,0.5 10.6,4.5 Q9,2.5 7,3.2 Q5,2.5 3.5,4.5 Z" fill="#9a5418"/><path d="M7.5,9 H11.5 V6 L16,10.8 L11.5,15.5 V12.6 H7.5 Z" fill="#d8283a" stroke="#7a0818" stroke-width="0.8"/></svg>
<div class="a" style="left:1454px;top:57px;width:224px;height:1px;background:#f4f8fd"></div>
<div class="hdr" style="left:1454px;top:58px;width:224px;height:31px"></div>
<div class="ttl" style="left:1459.3px;top:68px">Contact details</div>
<div class="btn" style="left:1589px;top:63px;width:66px;height:20px"></div>
<svg class="ic" style="left:1592px;top:65px" width="13" height="17" viewBox="0 0 13 17"><path d="M0.5,0.5 H9 L12.5,4 V16.5 H0.5 Z" fill="#fff" stroke="#6c6c6c"/><path d="M2.5,5.5 H10.5 M2.5,8 H10.5 M2.5,10.5 H10.5 M2.5,13 H10.5" stroke="#7c7c7c" stroke-width="0.9"/></svg>
<div class="t" style="left:1610px;top:68.5px;font-size:11px;color:#222">Filing</div>
<div class="a" style="left:1640px;top:66px;width:1px;height:15px;background:#c8c8c8"></div>
<svg class="ic" style="left:1642px;top:67px" width="11" height="11" viewBox="0 0 11 11"><path d="M5.5,0.5 V10.5 M0.5,5.5 H10.5" stroke="#2a5a9a" stroke-width="3"/></svg>
<div class="tool" style="left:1658.5px;top:65.5px"></div>
<svg class="ic" style="left:1660.5px;top:67.5px" width="10" height="10" viewBox="0 0 10 10"><path d="M1.5,5 L5,1.8 L8.5,5 M1.5,8.5 L5,5.3 L8.5,8.5" fill="none" stroke="#2a5a9a" stroke-width="1.3"/></svg>
<svg class="ic" style="left:1458px;top:93px" width="14" height="14" viewBox="0 0 14 14"><path d="M1,13.5 Q1,8.5 7,8.5 Q13,8.5 13,13.5 Z" fill="#6ab0f4" stroke="#e8a040" stroke-width="1"/><circle cx="7" cy="5" r="3.2" fill="#f6d0a8"/><path d="M3.7,5 Q3.6,1 7,1 Q10.4,1 10.3,5 Q9,3 7,3.6 Q5,3 3.7,5 Z" fill="#9c5a28"/></svg>
<div class="t" style="left:1477.2px;top:96.1px;font-weight:bold;font-size:12px;color:#111;letter-spacing:0px">Mr Max Mustermann</div>
<svg class="ic" style="left:1457px;top:114px" width="15" height="10" viewBox="0 0 15 10"><rect x="0.5" y="0.5" width="14.5" height="9.5" fill="#f4f8fc" stroke="#7a98c0"/><path d="M1,1 L7.75,6 L14.5,1" fill="none" stroke="#a0b8d8"/></svg>
<div class="t g11" style="left:1476.6px;top:112px;line-height:11.8px">Musterstraße 12<br>55555 Musterhausen<br>Deutschland</div>
<svg class="ic" style="left:1457px;top:153px" width="15" height="14" viewBox="0 0 15 14"><path d="M0.5,4 Q0.5,0.5 7.5,0.5 Q14.5,0.5 14.5,4 V5 H11 V3.5 H4 V5 H0.5 Z" fill="#8c9cb0" stroke="#5a6a80" stroke-width="0.8"/><path d="M2.5,5 H12.5 L14.5,13.5 H0.5 Z" fill="#8a9ab0" stroke="#5a6a80" stroke-width="0.8"/><rect x="4" y="6.5" width="7" height="4.5" fill="#f4f8fc"/></svg>
<div class="t g11" style="left:1476.6px;top:157px">0000000000</div>
<svg class="ic" style="left:1457px;top:172px" width="15" height="15" viewBox="0 0 15 15"><path d="M2.5,7 V14 H12.5 V7" fill="#f8ecd4" stroke="#b88840" stroke-width="0.8"/><path d="M7.5,0.5 L15,7.8 H0 Z" fill="#e8a040" stroke="#b87028" stroke-width="0.7"/><rect x="6" y="9" width="3" height="5" fill="#8a8a8a"/><rect x="0" y="13.5" width="15" height="2" fill="#52a848"/></svg>
<div class="t g11" style="left:1477px;top:176px;letter-spacing:0.55px">1111111111</div>
<svg class="ic" style="left:1457px;top:192px" width="15" height="10" viewBox="0 0 15 10"><rect x="0.5" y="0.5" width="14.5" height="9.5" fill="#f4f8fc" stroke="#8a9cb8"/><path d="M1,1 L7.75,6 L14.5,1" fill="none" stroke="#a0b8d8"/></svg>
<div class="t g11" style="left:1476.6px;top:193.5px;color:#1aa0e0;text-decoration:underline">muster@mustermann.de</div>
<svg class="ic" style="left:1457px;top:211px" width="16" height="16" viewBox="0 0 16 16"><rect x="0" y="0" width="16" height="16" rx="2.5" fill="#2f68a8"/><rect x="3" y="6" width="2.2" height="7" fill="#fff"/><circle cx="4.1" cy="3.8" r="1.3" fill="#fff"/><path d="M6.8,13 V6 H8.8 V7 Q9.8,5.8 11.3,5.8 Q13.3,5.8 13.3,8.5 V13 H11.2 V9 Q11.2,7.6 10.1,7.6 Q8.9,7.6 8.9,9 V13 Z" fill="#fff"/></svg>
<svg class="ic" style="left:1480px;top:211px" width="16" height="16" viewBox="0 0 16 16"><rect x="0" y="0" width="16" height="16" rx="2.5" fill="#1e5848"/><path d="M2.8,4.5 H5.3 L7.2,7.8 L5.2,11.3 H2.7 L4.7,7.8 Z" fill="#f4fff8"/><path d="M10.5,1.8 H13 L9.2,8.5 L11.8,13.8 H9.3 L6.7,8.5 Z" fill="#f4fff8"/></svg>
<svg class="ic" style="left:1503px;top:211px" width="16" height="16" viewBox="0 0 16 16"><rect x="0" y="0" width="16" height="16" rx="2.5" fill="#3b62a4"/><path d="M8.3,16 V9.5 H6.5 V7.4 H8.3 V5.8 Q8.3,3.5 10.6,3.5 H12 V5.4 H11.1 Q10.4,5.4 10.4,6.1 V7.4 H12 L11.7,9.5 H10.4 V16 Z" fill="#fff"/></svg>
<div class="a" style="left:1454px;top:233px;width:224px;height:1px;background:#99bbe8"></div>
<div class="btn" style="left:1457px;top:237px;width:46px;height:20px"></div>
<svg class="ic" style="left:1458.5px;top:239px" width="16" height="16" viewBox="0 0 16 16"><path d="M1.5,12 L10.5,3 L13.5,6 L4.5,15 L0.8,15.8 Z" fill="#f6d462" stroke="#b87a20" stroke-width="0.9"/><path d="M10.5,3 L12,1.5 Q13,0.6 14,1.6 L14.9,2.5 Q15.8,3.5 14.9,4.5 L13.5,6 Z" fill="#e0a078" stroke="#b87a20" stroke-width="0.9"/><path d="M2,12.5 L4,14.5" stroke="#c88a30" stroke-width="0.8"/></svg>
<div class="t" style="left:1478.6px;top:243.4px;font-size:11px;color:#222;letter-spacing:0.2px">Edit</div>
<div class="a" style="left:1454px;top:262px;width:224px;height:1px;background:#f4f8fd"></div>
<div class="hdr" style="left:1454px;top:263px;width:224px;height:24px"></div>
<div class="ttl" style="left:1459px;top:268.5px">Tags</div>
<div class="tool" style="left:1658.5px;top:266.5px"></div>
<svg class="ic" style="left:1660.5px;top:268.5px" width="10" height="10" viewBox="0 0 10 10"><path d="M1.5,5 L5,1.8 L8.5,5 M1.5,8.5 L5,5.3 L8.5,8.5" fill="none" stroke="#2a5a9a" stroke-width="1.3"/></svg>
<div class="a" style="left:1462px;top:295px;width:158px;height:22px;border:1px solid #b5b8c8;background:linear-gradient(#f0f0f0 0,#fff 3px,#fff)"></div>
<div class="t" style="left:1466.2px;top:300.5px;font-size:12.4px;color:#b8b8b8">Insert tag and press Enter</div>
<div class="a" style="left:1619px;top:295px;width:18px;height:22px;border:1px solid #b5b8c8;background:linear-gradient(#f4f4f4,#d8d8d8)"></div>
<svg class="ic" style="left:1623px;top:300px" width="10" height="10" viewBox="0 0 10 10"><path d="M1.5,3 L5,6.5 L8.5,3" fill="none" stroke="#1c3a78" stroke-width="2"/></svg>
<svg class="ic" style="left:1462px;top:332px" width="15" height="15" viewBox="0 0 15 15"><path d="M1.2,2.2 L3.6,0.8 L7.8,1.4 L14.5,8.1 L8.6,14 L1.9,7.3 Z" fill="#fafcff" stroke="#aebcd2" stroke-width="0.9"/><path d="M5.5,5.8 L10.2,10.5 L12,8.7 L7.3,4 Z" fill="#86bce8"/><circle cx="3.8" cy="3.3" r="0.9" fill="none" stroke="#9aaac4" stroke-width="0.7"/></svg>
<div class="a" style="left:1454px;top:358px;width:224px;height:1px;background:#f4f8fd"></div>
<div class="hdr" style="left:1454px;top:359px;width:224px;height:24px"></div>
<div class="ttl" style="left:1459px;top:364.5px">Contact relations</div>
<div class="tool" style="left:1658.5px;top:362.5px"></div>
<svg class="ic" style="left:1660.5px;top:364.5px" width="10" height="10" viewBox="0 0 10 10"><path d="M1.5,5 L5,1.8 L8.5,5 M1.5,8.5 L5,5.3 L8.5,8.5" fill="none" stroke="#2a5a9a" stroke-width="1.3"/></svg>
<div class="a" style="left:1457px;top:386px;width:218px;height:21px;background:#fcfbf9"></div>
<div class="t g11" style="left:1459.3px;top:392px">Muster GmbH</div>
<svg class="ic" style="left:1659.5px;top:393.5px" width="10" height="10" viewBox="0 0 10 10"><path d="M1.5,1.5 L8.5,8.5 M8.5,1.5 L1.5,8.5" stroke="#8aa0c0" stroke-width="2.4"/></svg>
</body></html>
